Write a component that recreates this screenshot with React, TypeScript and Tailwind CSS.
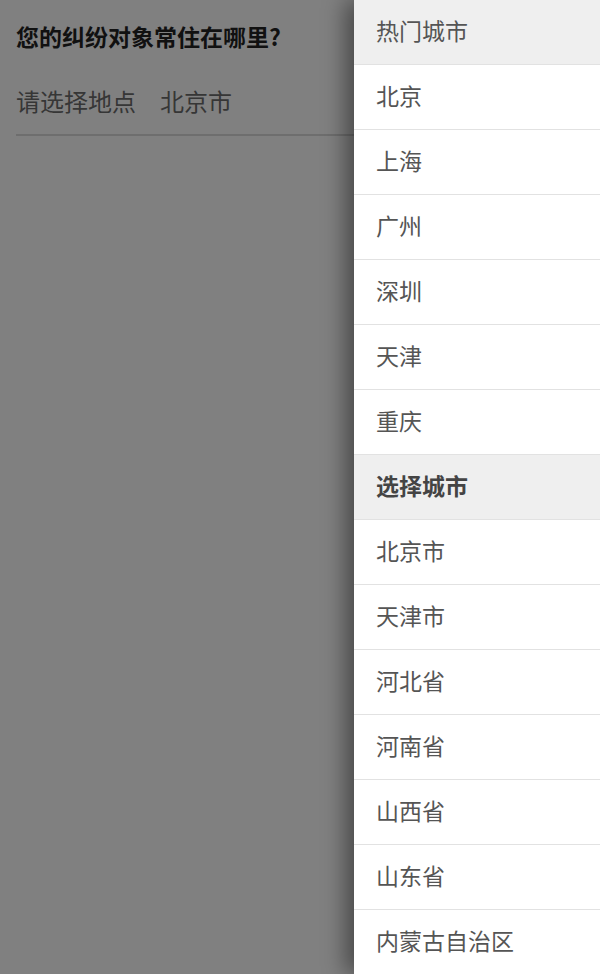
import React from "react";

const hot = ["北京", "上海", "广州", "深圳", "天津", "重庆"];
const provinces = ["北京市", "天津市", "河北省", "河南省", "山西省", "山东省", "内蒙古自治区"];

export default function App() {
  return (
    <div
      className="flex w-[600px] h-[974px] overflow-hidden bg-[#808080]"
      style={{ fontFamily: '"Noto Sans CJK SC", "Noto Sans", sans-serif' }}
    >
      <div className="flex-1 flex flex-col pl-4">
        <div className="pt-[20px] h-[62px] text-[23px] leading-[32px] font-bold text-[#111]">
          您的纠纷对象常住在哪里?
        </div>
        <div className="h-[74px] pt-[5px] flex items-center gap-6 text-[24px] text-[#363636] border-b-2 border-[#6e6e6e]">
          <span>请选择地点</span>
          <span>北京市</span>
        </div>
      </div>
      <div className="w-[246px] shrink-0 bg-white shadow-[-8px_0_22px_rgba(0,0,0,0.45)] flex flex-col">
        <div className="h-[65px] shrink-0 flex items-center pl-[22px] pb-[4px] bg-[#efefef] border-b border-[#e2e2e2] text-[23px] text-[#555]">
          热门城市
        </div>
        {hot.map((c) => (
          <div
            key={c}
            className="h-[65px] shrink-0 flex items-center pl-[22px] pb-[4px] border-b border-[#e2e2e2] text-[23px] text-[#555]"
          >
            {c}
          </div>
        ))}
        <div className="h-[65px] shrink-0 flex items-center pl-[22px] pb-[4px] bg-[#efefef] border-b border-[#e2e2e2] text-[23px] font-semibold text-[#444]">
          选择城市
        </div>
        {provinces.map((c) => (
          <div
            key={c}
            className="h-[65px] shrink-0 flex items-center pl-[22px] pb-[4px] border-b border-[#e2e2e2] text-[23px] text-[#555]"
          >
            {c}
          </div>
        ))}
      </div>
    </div>
  );
}
